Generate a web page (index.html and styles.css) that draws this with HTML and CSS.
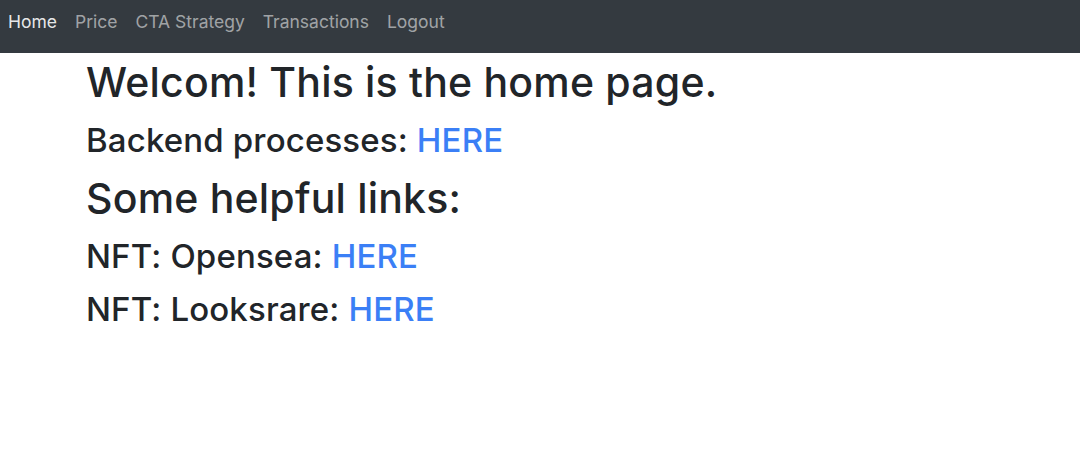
FILE: index.html
```html
<!DOCTYPE html>
<html lang="en">
<head>
<meta charset="utf-8">
<title>Home</title>
<link rel="stylesheet" href="styles.css">
</head>
<body>
<nav class="navbar">
  <a class="nav-link active" href="#">Home</a>
  <a class="nav-link" href="#">Price</a>
  <a class="nav-link" href="#">CTA Strategy</a>
  <a class="nav-link" href="#">Transactions</a>
  <a class="nav-link" href="#">Logout</a>
</nav>
<main class="content">
  <h1 class="title">Welcom! This is the home page.</h1>
  <h2 class="sub">Backend processes: <a href="#">HERE</a></h2>
  <h1 class="title">Some helpful links:</h1>
  <h2 class="sub">NFT: Opensea: <a href="#">HERE</a></h2>
  <h2 class="sub">NFT: Looksrare: <a href="#">HERE</a></h2>
</main>
</body>
</html>
```
FILE: styles.css
```css
* { box-sizing: border-box; }
html, body { margin: 0; padding: 0; }
body {
  font-family: Inter, "Noto Sans", sans-serif;
  color: #212529;
  background: #fff;
}
a { text-decoration: none; }
.navbar {
  display: flex;
  align-items: center;
  height: 53px;
  background: #343a40;
  padding: 0 0 10px 0;
}
.nav-link {
  font-size: 17.5px;
  color: rgba(255,255,255,0.55);
  padding: 0 9px;
}
.nav-link:first-child { padding-left: 8px; }
.nav-link.active { color: rgba(255,255,255,0.9); }
.content {
  padding: 5px 0 0 86px;
}
.title {
  font-size: 41px;
  font-weight: 500;
  line-height: 48px;
  margin: 0 0 15px;
  letter-spacing: 0.2px;
}
.sub {
  font-size: 33px;
  font-weight: 500;
  line-height: 38px;
  margin: 0 0 15px;
  letter-spacing: 0.15px;
}
.sub a { color: #3b7ff6; }
```
